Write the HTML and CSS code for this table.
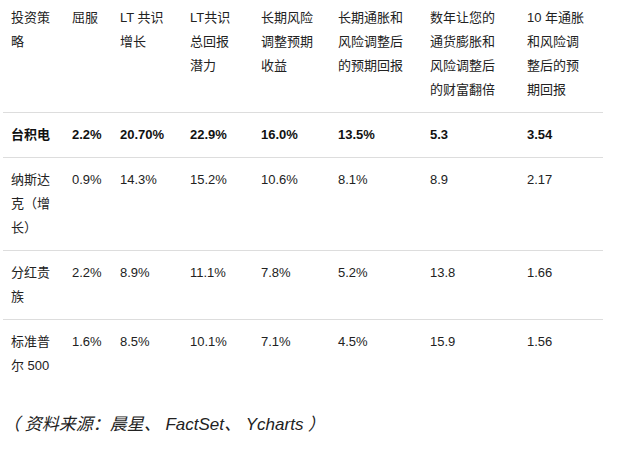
FILE: index.html
```html
<!DOCTYPE html>
<html lang="zh-CN">
<head>
<meta charset="utf-8">
<title>投资策略</title>
<link rel="stylesheet" href="styles.css">
</head>
<body>
<div class="page">
  <table class="data">
    <colgroup>
      <col class="c1"><col class="c2"><col class="c3"><col class="c4">
      <col class="c5"><col class="c6"><col class="c7"><col class="c8">
    </colgroup>
    <thead>
      <tr>
        <th>投资策略</th>
        <th>屈服</th>
        <th>LT 共识增长</th>
        <th>LT共识总回报潜力</th>
        <th>长期风险调整预期收益</th>
        <th>长期通胀和风险调整后的预期回报</th>
        <th>数年让您的通货膨胀和风险调整后的财富翻倍</th>
        <th>10 年通胀和风险调整后的预期回报</th>
      </tr>
    </thead>
    <tbody>
      <tr class="hl">
        <td>台积电</td><td>2.2%</td><td>20.70%</td><td>22.9%</td><td>16.0%</td><td>13.5%</td><td>5.3</td><td>3.54</td>
      </tr>
      <tr>
        <td>纳斯达克（增长）</td><td>0.9%</td><td>14.3%</td><td>15.2%</td><td>10.6%</td><td>8.1%</td><td>8.9</td><td>2.17</td>
      </tr>
      <tr>
        <td>分红贵族</td><td>2.2%</td><td>8.9%</td><td>11.1%</td><td>7.8%</td><td>5.2%</td><td>13.8</td><td>1.66</td>
      </tr>
      <tr>
        <td>标准普尔 500</td><td>1.6%</td><td>8.5%</td><td>10.1%</td><td>7.1%</td><td>4.5%</td><td>15.9</td><td>1.56</td>
      </tr>
    </tbody>
  </table>
  <p class="source">（ 资料来源：晨星、 FactSet、 Ycharts ）</p>
</div>
</body>
</html>
```

FILE: styles.css
```css
html, body {
  margin: 0;
  padding: 0;
  background: #fff;
}

.page {
  padding-left: 3px;
  font-family: "Liberation Sans", Arial, "Noto Sans CJK SC", sans-serif;
  color: #222;
  text-spacing-trim: space-all;
}

.data {
  width: 600px;
  table-layout: fixed;
  border-collapse: collapse;
  font-size: 13px;
  line-height: 24px;
}

.c1 { width: 61px; }
.c2 { width: 48px; }
.c3 { width: 70px; }
.c4 { width: 71px; }
.c5 { width: 77px; }
.c6 { width: 92px; }
.c7 { width: 97px; }
.c8 { width: 84px; }

.data th,
.data td {
  text-align: left;
  vertical-align: top;
  font-weight: normal;
  padding: 10px 8px 10px 8px;
}

.data th {
  padding-top: 6px;
}

.data th:nth-child(3),
.data th:nth-child(5),
.data th:nth-child(6),
.data th:nth-child(8) {
  padding-right: 16px;
}

.data th:nth-child(4) {
  padding-right: 14px;
}

.data th:nth-child(7) {
  padding-right: 16px;
}

.data tbody tr {
  border-top: 1px solid #dddddd;
}

.data tr.hl td {
  font-weight: bold;
  color: #111;
}

.source {
  margin: 25px 0 0 0;
  font-size: 17px;
  line-height: 24px;
  font-style: italic;
}
```
